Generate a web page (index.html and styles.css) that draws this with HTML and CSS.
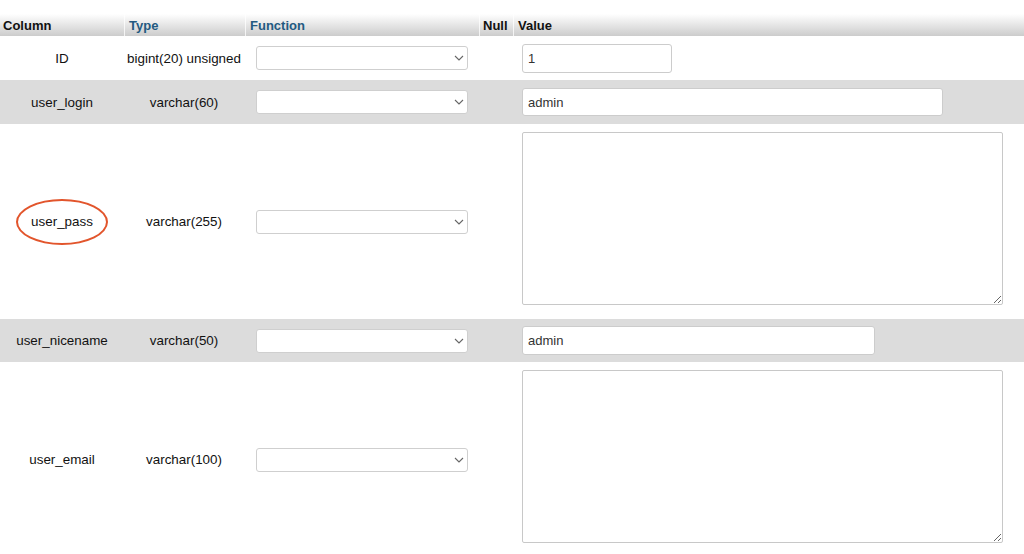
FILE: index.html
```html
<!DOCTYPE html>
<html>
<head>
<meta charset="utf-8">
<link rel="stylesheet" href="styles.css">
</head>
<body>
<div class="page">
  <div class="grid">
    <div class="row head">
      <div class="th th-col">Column</div>
      <div class="th th-type link">Type</div>
      <div class="th th-fn link">Function</div>
      <div class="th th-null">Null</div>
      <div class="th th-val">Value</div>
    </div>

    <div class="row odd r-short">
      <div class="td name">ID</div>
      <div class="td type">bigint(20) unsigned</div>
      <div class="td fn"><div class="sel"><select class="select"><option></option></select><svg class="chev" viewBox="0 0 10 6" width="10" height="6"><path d="M1 1 L5 5 L9 1" fill="none" stroke="#666" stroke-width="1.1"/></svg></div></div>
      <div class="td null"></div>
      <div class="td val"><input class="inp inp-id" type="text" value="1"></div>
    </div>

    <div class="row even r-short">
      <div class="td name">user_login</div>
      <div class="td type">varchar(60)</div>
      <div class="td fn"><div class="sel"><select class="select"><option></option></select><svg class="chev" viewBox="0 0 10 6" width="10" height="6"><path d="M1 1 L5 5 L9 1" fill="none" stroke="#666" stroke-width="1.1"/></svg></div></div>
      <div class="td null"></div>
      <div class="td val"><input class="inp inp-login" type="text" value="admin"></div>
    </div>

    <div class="row odd r-tall">
      <div class="td name"><span class="circled">user_pass</span></div>
      <div class="td type">varchar(255)</div>
      <div class="td fn"><div class="sel"><select class="select"><option></option></select><svg class="chev" viewBox="0 0 10 6" width="10" height="6"><path d="M1 1 L5 5 L9 1" fill="none" stroke="#666" stroke-width="1.1"/></svg></div></div>
      <div class="td null"></div>
      <div class="td val val-top"><textarea class="ta"></textarea></div>
    </div>

    <div class="row even r-short2">
      <div class="td name">user_nicename</div>
      <div class="td type">varchar(50)</div>
      <div class="td fn"><div class="sel"><select class="select"><option></option></select><svg class="chev" viewBox="0 0 10 6" width="10" height="6"><path d="M1 1 L5 5 L9 1" fill="none" stroke="#666" stroke-width="1.1"/></svg></div></div>
      <div class="td null"></div>
      <div class="td val"><input class="inp inp-nice" type="text" value="admin"></div>
    </div>

    <div class="row odd r-tall">
      <div class="td name">user_email</div>
      <div class="td type">varchar(100)</div>
      <div class="td fn"><div class="sel"><select class="select"><option></option></select><svg class="chev" viewBox="0 0 10 6" width="10" height="6"><path d="M1 1 L5 5 L9 1" fill="none" stroke="#666" stroke-width="1.1"/></svg></div></div>
      <div class="td null"></div>
      <div class="td val val-top"><textarea class="ta"></textarea></div>
    </div>
  </div>
</div>
</body>
</html>
```

FILE: styles.css
```css
* { box-sizing: border-box; }

html, body {
  margin: 0;
  padding: 0;
  background: #fff;
  overflow: hidden;
}

body {
  font-family: "Liberation Sans", Arial, Helvetica, sans-serif;
  font-size: 13px;
  color: #111;
}

.page {
  padding-top: 14px;
}

.row {
  display: grid;
  grid-template-columns: 124px 121px 234px 34px 1fr;
}

.head {
  height: 22px;
  background: linear-gradient(to bottom, #ffffff 0%, #cccccc 100%);
}

.th {
  font-weight: bold;
  color: #111;
  display: flex;
  align-items: center;
  padding: 1px 0 0 4px;
  border-left: 1px solid rgba(255, 255, 255, 0.75);
}

.th-col { padding-left: 3px; border-left: none; }
.th-null { padding-left: 3px; }
.link { color: #235a81; }

.odd { background: #fff; }
.even { background: #dcdcdc; }

.r-short { height: 44px; }
.r-short2 { height: 43px; }
.r-tall { height: 195px; }

.td {
  display: flex;
  align-items: center;
}

.name, .type {
  justify-content: center;
  font-size: 13.4px;
}

.type { padding-right: 1px; }

.fn {
  padding-left: 11px;
}

.sel {
  position: relative;
  width: 212px;
  height: 24px;
}

.select {
  appearance: none;
  -webkit-appearance: none;
  width: 100%;
  height: 100%;
  margin: 0;
  background: #fff;
  border: 1px solid #cfcfcf;
  border-radius: 3px;
  font: inherit;
}

.chev {
  position: absolute;
  right: 4px;
  top: 9px;
}

.val {
  padding-left: 9px;
}

.val-top {
  align-items: flex-start;
  padding-top: 8px;
}

.inp {
  height: 29px;
  margin: 0;
  padding: 0 5px;
  background: #fff;
  border: 1px solid #cccccc;
  border-radius: 3px;
  font-family: "Liberation Sans", Arial, Helvetica, sans-serif;
  font-size: 13px;
  color: #333;
}

.inp-id { width: 150px; }
.inp-login { width: 421px; height: 28px; }
.inp-nice { width: 353px; }

.ta {
  display: block;
  width: 481px;
  height: 173px;
  margin: 0;
  border: 1px solid #c8c8c8;
  border-radius: 2px;
  background: #fff;
  resize: both;
}

.circled {
  position: relative;
  top: 0;
}

.circled::after {
  content: "";
  position: absolute;
  left: 50%;
  top: 50%;
  width: 88px;
  height: 42px;
  transform: translate(-50%, -50%);
  border: 2px solid #e2552c;
  border-radius: 50%;
}
```
